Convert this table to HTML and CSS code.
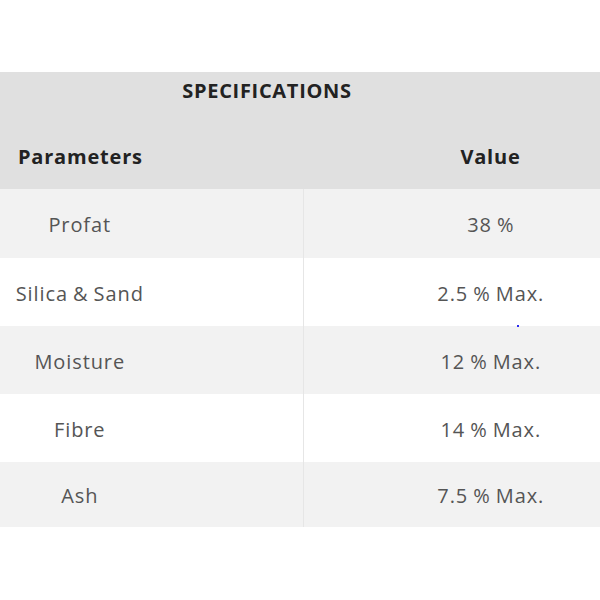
FILE: index.html
```html
<!DOCTYPE html>
<html>
<head>
<meta charset="utf-8">
<link rel="stylesheet" href="styles.css">
</head>
<body>
<div class="page">
  <table class="spec">
    <colgroup>
      <col class="col-param">
      <col class="col-value">
    </colgroup>
    <thead>
      <tr class="title-row">
        <th colspan="2" class="title">SPECIFICATIONS</th>
      </tr>
      <tr class="head-row">
        <th class="h-param">Parameters</th>
        <th class="h-value">Value</th>
      </tr>
    </thead>
    <tbody>
      <tr class="odd first"><td class="c-param">Profat</td><td class="c-value">38 %</td></tr>
      <tr class="even"><td class="c-param">Silica &amp; Sand</td><td class="c-value">2.5 % Max.</td></tr>
      <tr class="odd"><td class="c-param">Moisture</td><td class="c-value">12 % Max.</td></tr>
      <tr class="even"><td class="c-param">Fibre</td><td class="c-value">14 % Max.</td></tr>
      <tr class="odd last"><td class="c-param">Ash</td><td class="c-value">7.5 % Max.</td></tr>
    </tbody>
  </table>
  <span class="dot"></span>
</div>
</body>
</html>
```
FILE: styles.css
```css
html, body {
  margin: 0;
  padding: 0;
  background: #ffffff;
}
.page {
  position: relative;
  width: 600px;
  height: 600px;
  padding-top: 72px;
  box-sizing: border-box;
}
.spec {
  width: 600px;
  border-collapse: collapse;
  font-family: "Open Sans", "DejaVu Sans", sans-serif;
  table-layout: fixed;
}
.col-param { width: 303px; }
.col-value { width: 297px; }
.spec th, .spec td {
  padding: 0;
}
.title-row, .head-row {
  background: #e0e0e0;
}
.title {
  height: 36px;
  font-size: 20px;
  font-weight: 700;
  letter-spacing: 0.7px;
  color: #222;
  text-align: center;
  padding-right: 66px !important;
  vertical-align: middle;
}
.head-row th {
  height: 65px;
  padding-top: 16px !important;
  font-size: 20px;
  font-weight: 700;
  letter-spacing: 0.8px;
  color: #222;
  vertical-align: middle;
}
.h-param {
  text-align: left;
  padding-left: 18px !important;
}
.h-value {
  text-align: center;
  padding-left: 78px !important;
}
.spec tbody tr {
  height: 68px;
}
.spec tbody tr.first {
  height: 69px;
}
.spec tbody tr.last {
  height: 65px;
}
.odd { background: #f2f2f2; }
.even { background: #ffffff; }
.spec td {
  font-size: 20px;
  letter-spacing: 0.9px;
  word-spacing: -1px;
  color: #555555;
  text-align: center;
  vertical-align: middle;
  padding-top: 2px !important;
}
.c-param {
  padding-right: 143px !important;
  border-right: 1px solid #e6e6e6;
}
.c-value {
  padding-left: 78px !important;
}
.dot {
  position: absolute;
  left: 517px;
  top: 325px;
  width: 2px;
  height: 2px;
  background: #2a2af0;
}
```
